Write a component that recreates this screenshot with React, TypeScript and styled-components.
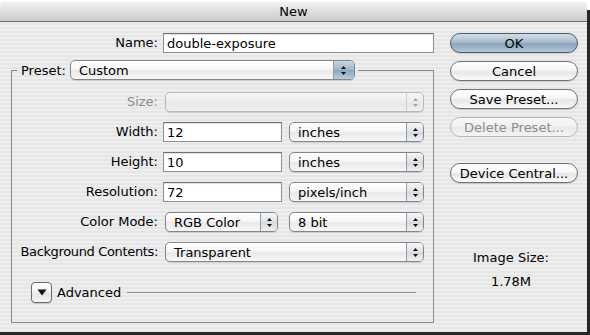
import React from "react";
import styled, { createGlobalStyle } from "styled-components";

const GlobalStyle = createGlobalStyle`
  html, body { margin: 0; padding: 0; }
  body {
    width: 590px;
    height: 335px;
    overflow: hidden;
    background: linear-gradient(to bottom, #ffffff 0 10px, #262626 10px);
    font-family: "DejaVu Sans", "Liberation Sans", sans-serif;
    font-size: 13px;
    color: #000;
  }
`;

const Arrows: React.FC<{ color?: string }> = ({ color = "#111" }) => (
  <svg width="7" height="11" viewBox="0 0 7 11">
    <path d="M3.5 1 L6 4 L1 4 Z" fill={color} />
    <path d="M3.5 10 L6 7 L1 7 Z" fill={color} />
  </svg>
);

interface SelectProps {
  value: string;
  width?: number;
  span?: number;
  blue?: boolean;
  disabled?: boolean;
}

const Select: React.FC<SelectProps> = ({ value, width, span, blue, disabled }) => (
  <SelectBox $width={width} $span={span} $disabled={disabled}>
    <SelectValue>{value}</SelectValue>
    <Stepper $blue={blue} $disabled={disabled}>
      <Arrows color={disabled ? "#a8a8a8" : "#111"} />
    </Stepper>
  </SelectBox>
);

export default function App() {
  return (
    <>
      <GlobalStyle />
      <Window>
        <TitleBar>New</TitleBar>
        <Body>
          <MainColumn>
            <NameRow>
              <Label>Name:</Label>
              <TextInput $width={271}>double-exposure</TextInput>
            </NameRow>

            <Group>
              <Legend>
                <LegendLabel>Preset:</LegendLabel>
                <Select value="Custom" width={285} blue />
              </Legend>

              <FieldGrid>
                <Label $disabled>Size:</Label>
                <Select value="" span={2} disabled />

                <Label>Width:</Label>
                <TextInput>12</TextInput>
                <Select value="inches" />

                <Label>Height:</Label>
                <TextInput>10</TextInput>
                <Select value="inches" />

                <Label>Resolution:</Label>
                <TextInput>72</TextInput>
                <Select value="pixels/inch" />

                <Label>Color Mode:</Label>
                <Select value="RGB Color" width={113} />
                <Select value="8 bit" />

                <Label $tight>Background Contents:</Label>
                <Select value="Transparent" span={2} />
              </FieldGrid>

              <AdvancedRow>
                <Disclosure aria-label="Advanced">
                  <svg width="10" height="7" viewBox="0 0 10 7">
                    <path d="M0.5 0.5 L9.5 0.5 L5 6.5 Z" fill="#111" />
                  </svg>
                </Disclosure>
                <span>Advanced</span>
                <Rule />
              </AdvancedRow>
            </Group>
          </MainColumn>

          <SideColumn>
            <PushButton $primary>OK</PushButton>
            <PushButton>Cancel</PushButton>
            <PushButton>Save Preset...</PushButton>
            <PushButton disabled>Delete Preset...</PushButton>
            <PushButton $gapBefore={18}>Device Central...</PushButton>
            <ImageSize>
              <span>Image Size:</span>
              <span>1.78M</span>
            </ImageSize>
          </SideColumn>
        </Body>
      </Window>
    </>
  );
}

/* ================= styles ================ */

const Window = styled.div`
  margin-top: 1px;
  width: 587px;
  height: 331px;
  display: flex;
  flex-direction: column;
  border-radius: 5px 5px 0 0;
  overflow: hidden;
  background: repeating-linear-gradient(
    to bottom,
    #eeeeee 0 2px,
    #e6e6e6 2px 4px
  );
`;

const TitleBar = styled.div`
  height: 21px;
  flex: none;
  box-sizing: border-box;
  display: flex;
  align-items: center;
  justify-content: center;
  background: linear-gradient(to bottom, #f1f1f1, #dedede 50%, #cbcbcb);
  border-top: 1px solid #fafafa;
  border-bottom: 1px solid #686868;
  font-size: 13px;
`;

const Body = styled.div`
  flex: 1;
  display: flex;
  gap: 16px;
  padding: 11px 9px 0 10px;
`;

const MainColumn = styled.div`
  width: 424px;
  display: flex;
  flex-direction: column;
  gap: 7px;
`;

const NameRow = styled.div`
  display: flex;
  align-items: center;
  gap: 5px;

  & > span:first-child {
    width: 148px;
  }
`;

const Label = styled.span<{ $disabled?: boolean; $tight?: boolean }>`
  text-align: right;
  white-space: nowrap;
  align-self: center;
  line-height: 20px;
  letter-spacing: ${(p) => (p.$tight ? "-0.35px" : "0")};
  color: ${(p) => (p.$disabled ? "#8c8c8c" : "#000")};
`;

const TextInput = styled.div<{ $width?: number }>`
  box-sizing: border-box;
  height: 20px;
  width: ${(p) => (p.$width ? `${p.$width}px` : "auto")};
  display: flex;
  align-items: center;
  padding-left: 3px;
  background: #fff;
  border: 1px solid #8f8f8f;
  border-top-color: #6e6e6e;
  box-shadow: inset 0 1px 1px rgba(0, 0, 0, 0.12);
`;

const Group = styled.fieldset`
  margin: 0 0 0 1px;
  padding: 0 0 19px;
  width: 423px;
  box-sizing: border-box;
  min-width: 0;
  border: 1px solid #8a8a8a;
  border-radius: 0;
`;

const Legend = styled.legend`
  display: flex;
  align-items: center;
  gap: 2px;
  margin-left: 5px;
  padding: 0 3px 0 4px;
`;

const LegendLabel = styled.span`
  white-space: nowrap;
`;

const FieldGrid = styled.div`
  display: grid;
  grid-template-columns: 146px 119px 137px;
  grid-auto-rows: 20px;
  column-gap: 5px;
  row-gap: 10px;
  padding-top: 12px;
`;

const SelectBox = styled.div<{ $width?: number; $span?: number; $disabled?: boolean }>`
  box-sizing: border-box;
  height: 20px;
  margin-left: 2px;
  width: ${(p) => (p.$width ? `${p.$width}px` : "auto")};
  grid-column: ${(p) => (p.$span ? `span ${p.$span}` : "auto")};
  display: flex;
  align-items: stretch;
  border: 1px solid ${(p) => (p.$disabled ? "#b9b9b9" : "#858585")};
  border-radius: 5px;
  overflow: hidden;
  background: ${(p) =>
    p.$disabled
      ? "linear-gradient(to bottom, #f6f6f6, #ececec 50%, #e6e6e6 51%, #f1f1f1)"
      : "linear-gradient(to bottom, #ffffff, #f7f7f7 45%, #e9e9e9 55%, #f7f7f7)"};
  box-shadow: 0 1px 1px rgba(0, 0, 0, 0.12);
`;

const SelectValue = styled.span`
  flex: 1;
  display: flex;
  align-items: center;
  padding-left: 8px;
  white-space: nowrap;
  overflow: hidden;
`;

const Stepper = styled.span<{ $blue?: boolean; $disabled?: boolean }>`
  width: ${(p) => (p.$blue ? 20 : 16)}px;
  flex: none;
  display: flex;
  align-items: center;
  justify-content: center;
  border-left: 1px solid ${(p) => (p.$disabled ? "#cfcfcf" : "#9a9a9a")};
  background: ${(p) =>
    p.$blue
      ? "linear-gradient(to bottom, #c9d6e3, #9fb3c8 50%, #8ea5bd 51%, #b9cbdc)"
      : p.$disabled
      ? "transparent"
      : "linear-gradient(to bottom, #f4f6f8, #dde2e8 50%, #d2d9e1 51%, #eef1f4)"};
`;

const AdvancedRow = styled.div`
  display: flex;
  align-items: center;
  gap: 5px;
  margin-top: 20px;
  padding: 0 17px 0 19px;
  height: 21px;
`;

const Disclosure = styled.button`
  width: 21px;
  height: 21px;
  flex: none;
  padding: 0;
  display: flex;
  align-items: center;
  justify-content: center;
  border: 1px solid #6a6a6a;
  border-radius: 4px;
  background: linear-gradient(to bottom, #ffffff, #f0f0f0 50%, #e2e2e2 51%, #f5f5f5);
  box-shadow: 0 1px 1px rgba(0, 0, 0, 0.15);
`;

const Rule = styled.div`
  flex: 1;
  height: 1px;
  margin-left: 1px;
  background: #8e8e8e;
`;

const SideColumn = styled.div`
  width: 128px;
  display: flex;
  flex-direction: column;
  gap: 8px;
`;

const PushButton = styled.button<{ $primary?: boolean; $gapBefore?: number }>`
  height: 20px;
  margin-top: ${(p) => p.$gapBefore ?? 0}px;
  padding: 0;
  font-family: inherit;
  font-size: 13px;
  color: #000;
  border-radius: 10px;
  border: 1px solid ${(p) => (p.$primary ? "#4d5d6e" : "#717171")};
  background: ${(p) =>
    p.$primary
      ? "linear-gradient(to bottom, #d3dee9, #a9bccf 45%, #8ba3bb 55%, #b6c8da)"
      : "linear-gradient(to bottom, #ffffff, #f6f6f6 45%, #e6e6e6 55%, #fafafa)"};
  box-shadow: 0 1px 1px rgba(0, 0, 0, 0.15);

  &:disabled {
    color: #8c8c8c;
    border-color: #b6b6b6;
    background: linear-gradient(to bottom, #f8f8f8, #f0f0f0 50%, #e9e9e9 51%, #f3f3f3);
    box-shadow: none;
  }
`;

const ImageSize = styled.div`
  margin-top: 59px;
  display: flex;
  flex-direction: column;
  align-items: center;
  gap: 8px;
  line-height: 16px;
  margin-left: -6px;
`;
